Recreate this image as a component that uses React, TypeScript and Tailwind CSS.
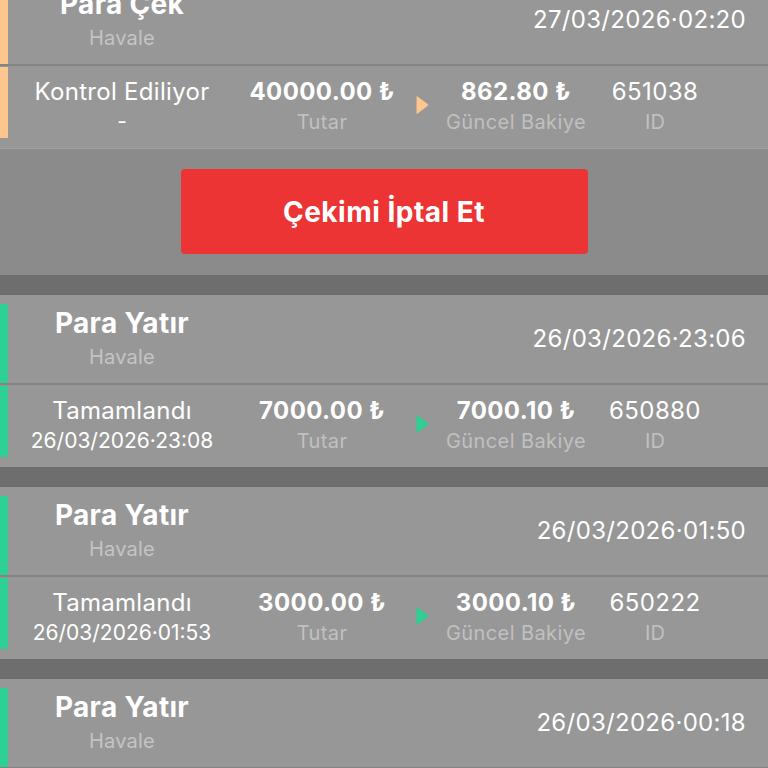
import React from "react";

type Tx = {
  title: string;
  date: string;
  status: string;
  statusSub: string;
  amount: string;
  balance: string;
  id: string;
  color: string;
};

const txs: Tx[] = [
  {
    title: "Para Çek",
    date: "27/03/2026·02:20",
    status: "Kontrol Ediliyor",
    statusSub: "-",
    amount: "40000.00 ₺",
    balance: "862.80 ₺",
    id: "651038",
    color: "orange",
  },
  {
    title: "Para Yatır",
    date: "26/03/2026·23:06",
    status: "Tamamlandı",
    statusSub: "26/03/2026·23:08",
    amount: "7000.00 ₺",
    balance: "7000.10 ₺",
    id: "650880",
    color: "green",
  },
  {
    title: "Para Yatır",
    date: "26/03/2026·01:50",
    status: "Tamamlandı",
    statusSub: "26/03/2026·01:53",
    amount: "3000.00 ₺",
    balance: "3000.10 ₺",
    id: "650222",
    color: "green",
  },
  {
    title: "Para Yatır",
    date: "26/03/2026·00:18",
    status: "Tamamlandı",
    statusSub: "26/03/2026·00:20",
    amount: "2000.00 ₺",
    balance: "2000.10 ₺",
    id: "650101",
    color: "green",
  },
];

function Arrow({ color }: { color: string }) {
  return (
    <svg width="14" height="20" viewBox="0 0 14 20" className="block">
      <path d="M1.5 2 Q1.5 0.8 2.6 1.6 L12.6 9 Q13.6 10 12.6 11 L2.6 18.4 Q1.5 19.2 1.5 18 Z" fill={color} />
    </svg>
  );
}

function Card({ tx, first }: { tx: Tx; first?: boolean }) {
  const bar = tx.color === "orange" ? "bg-[#fcc68e]" : "bg-[#2fd096]";
  const arrowColor = tx.color === "orange" ? "#fcc68e" : "#2fd096";
  return (
    <div className={`bg-[#979797] ${first ? "mt-[-24px]" : ""}`}>
      <div className="flex h-[88px]">
        <div className={`w-[8px] mt-[9px] ${bar}`} />
        <div className="flex flex-1 items-center">
          <div className="w-[228px] flex flex-col items-center">
            <div className="text-[28px] leading-[34px] font-bold text-white tracking-[0.3px]">{tx.title}</div>
            <div className="text-[20px] leading-[30px] text-[#c4c4c4] mt-[2px] tracking-[0.2px]">Havale</div>
          </div>
          <div className="flex-1 text-right pr-[22px] text-[24px] text-white tracking-[0.3px]">{tx.date}</div>
        </div>
      </div>
      <div className="h-[2px] bg-[#848484]" />
      <div className="flex h-[82px]">
        <div className={`w-[8px] mb-[10px] mt-[1px] ${bar}`} />
        <div className="flex flex-1 items-center">
          <div className="w-[228px] flex flex-col items-center">
            <div className="text-[24px] leading-[30px] text-white tracking-[0.3px]">{tx.status}</div>
            <div className="text-[21px] leading-[30px] text-white">{tx.statusSub}</div>
          </div>
          <div className="w-[172px] flex flex-col items-center">
            <div className="text-[24px] leading-[30px] font-bold text-white tracking-[0.4px]">{tx.amount}</div>
            <div className="text-[20px] leading-[30px] text-[#c0c0c0] tracking-[0.4px]">Tutar</div>
          </div>
          <div className="w-[24px] flex justify-start pl-[7px] mt-[-4px]">
            <Arrow color={arrowColor} />
          </div>
          <div className="w-[168px] flex flex-col items-center">
            <div className="text-[24px] leading-[30px] font-bold text-white tracking-[0.4px]">{tx.balance}</div>
            <div className="text-[20px] leading-[30px] text-[#c0c0c0] tracking-[0.4px]">Güncel Bakiye</div>
          </div>
          <div className="w-[110px] flex flex-col items-center">
            <div className="text-[24px] leading-[30px] text-white tracking-[0.4px]">{tx.id}</div>
            <div className="text-[20px] leading-[30px] text-[#c0c0c0]">ID</div>
          </div>
        </div>
      </div>
    </div>
  );
}

export default function App() {
  return (
    <div
      className="w-[768px] h-[768px] overflow-hidden bg-[#6e6e6e]"
      style={{ fontFamily: "Inter, 'Noto Sans', sans-serif" }}
    >
      <Card tx={txs[0]} first />
      <div className="h-[127px] bg-[#8b8b8b] pt-[20px] border-t border-[#a0a0a0]">
        <div className="mx-auto w-[407px] h-[85px] rounded-[4px] bg-[#ec3434] flex items-center justify-center text-white text-[28px] font-bold tracking-[0.5px]">
          Çekimi İptal Et
        </div>
      </div>
      <div className="flex flex-col gap-[20px] pt-[20px]">
        <Card tx={txs[1]} />
        <Card tx={txs[2]} />
        <Card tx={txs[3]} />
      </div>
    </div>
  );
}
